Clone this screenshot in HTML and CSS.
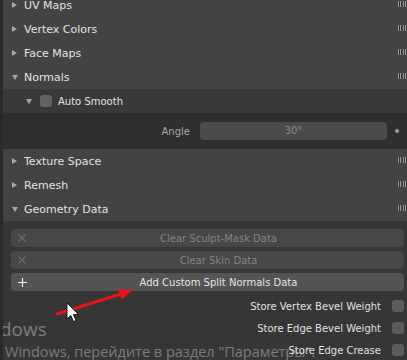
FILE: index.html
```html
<html>
  <head>
    <meta charset="utf-8" />
    <title>Properties</title>
    <link rel="stylesheet" href="styles.css">
  </head>
  <body>
    <div class="editor">
      <div class="panels">
        <div class="panel-head"><span class="tri"></span><span class="label">UV Maps</span><span class="grip"></span></div>
        <div class="panel-head"><span class="tri"></span><span class="label">Vertex Colors</span><span class="grip"></span></div>
        <div class="panel-head"><span class="tri"></span><span class="label">Face Maps</span><span class="grip"></span></div>
        <div class="panel-head"><span class="tri down"></span><span class="label">Normals</span><span class="grip"></span></div>

        <div class="sub-head">
          <span class="tri down"></span>
          <span class="check"></span>
          <span class="label">Auto Smooth</span>
        </div>
        <div class="sub-body">
          <div class="prop-row">
            <span class="prop-label">Angle</span>
            <div class="field">30°</div>
            <span class="deco"><span class="dot"></span></span>
          </div>
        </div>

        <div class="panel-head"><span class="tri"></span><span class="label">Texture Space</span><span class="grip"></span></div>
        <div class="panel-head"><span class="tri"></span><span class="label">Remesh</span><span class="grip"></span></div>
        <div class="panel-head"><span class="tri down"></span><span class="label">Geometry Data</span><span class="grip"></span></div>

        <div class="panel-body">
          <div class="button disabled">
            <span class="icon"><svg width="8" height="8" viewBox="0 0 8 8"><path d="M0.5 0.5 L7.5 7.5 M7.5 0.5 L0.5 7.5" stroke="#707070" stroke-width="1.1" /></svg></span>
            <span class="text">Clear Sculpt-Mask Data</span>
          </div>
          <div class="button disabled">
            <span class="icon"><svg width="8" height="8" viewBox="0 0 8 8"><path d="M0.5 0.5 L7.5 7.5 M7.5 0.5 L0.5 7.5" stroke="#707070" stroke-width="1.1" /></svg></span>
            <span class="text">Clear Skin Data</span>
          </div>
          <div class="button">
            <span class="icon"><svg width="9" height="9" viewBox="0 0 9 9"><path d="M4.5 0 L4.5 9 M0 4.5 L9 4.5" stroke="#f0f0f0" stroke-width="1.2" /></svg></span>
            <span class="text">Add Custom Split Normals Data</span>
          </div>

          <div class="check-row"><span>Store Vertex Bevel Weight</span><span class="check"></span></div>
          <div class="check-row"><span>Store Edge Bevel Weight</span><span class="check"></span></div>
          <div class="check-row"><span>Store Edge Crease</span><span class="check"></span></div>
        </div>
      </div>

      <div class="watermark">
        <div class="wm-title">dows</div>
        <div class="wm-text">Windows, перейдите в раздел "Параметры".</div>
      </div>

      <svg class="annot" width="407" height="360" viewBox="0 0 407 360">
        <line x1="57" y1="314" x2="121" y2="294" stroke="#e8141c" stroke-width="3" stroke-linecap="round" />
        <polygon points="133,290 121.5,299.5 118,289" fill="#e8141c" />
        <path d="M67 303 L67 319 L70.8 315.4 L73.6 321.6 L76 320.6 L73.3 314.5 L78.5 314.5 Z"
              fill="#ffffff" stroke="#000000" stroke-width="0.8" />
      </svg>
    </div>
  </body>
</html>
```

FILE: styles.css
```css
html, body {
  margin: 0;
  height: 100%;
}

body {
  background-color: #363636;
  font-family: "DejaVu Sans", Verdana, sans-serif;
  font-size: 10px;
  color: #e0e0e0;
  overflow: hidden;
}

.editor {
  position: relative;
  height: 360px;
  border-left: 3px solid #2a2a2a;
  overflow: hidden;
}

.panels {
  margin-top: -7px;
}

.panel-head {
  height: 24px;
  display: flex;
  align-items: center;
  padding-left: 9px;
  background-color: #434343;
  font-size: 11px;
  color: #e2e2e2;
}
.panel-head .label {
  flex: 1 1 0;
}

.tri {
  width: 0;
  height: 0;
  border-left: 5px solid #a6a6a6;
  border-top: 3.5px solid transparent;
  border-bottom: 3.5px solid transparent;
  margin-right: 7px;
}
.tri.down {
  border-left: 3px solid transparent;
  border-right: 3px solid transparent;
  border-top: 5px solid #a6a6a6;
  border-bottom: 0;
  margin-right: 6px;
}

.grip {
  width: 10px;
  height: 6px;
  margin-top: -2px;
  background-image: radial-gradient(circle, #c8c8c8 0.6px, transparent 0.8px);
  background-size: 2.5px 2px;
  background-color: #333333;
}

.sub-head {
  height: 24px;
  display: flex;
  align-items: center;
  padding-left: 23px;
  background-color: #393939;
}
.sub-head .tri.down {
  margin-right: 8px;
}

.check {
  width: 12px;
  height: 12px;
  border-radius: 3px;
  background-color: #626262;
}
.sub-head .check {
  margin-right: 6px;
}

.sub-body {
  background-color: #2f2f2f;
}

.prop-row {
  height: 36px;
  display: flex;
  align-items: center;
}
.prop-label {
  flex: 0 0 187px;
  text-align: right;
  color: #a8a8a8;
  margin-right: 10px;
}
.field {
  flex: 0 0 187px;
  height: 18px;
  line-height: 18px;
  border-radius: 4px;
  background-color: #4b4b4b;
  color: #8c8c8c;
  text-align: center;
}
.deco {
  flex: 0 0 20px;
  display: flex;
  justify-content: center;
}
.dot {
  width: 4px;
  height: 4px;
  border-radius: 2px;
  background-color: #9a9a9a;
}

.panel-body {
  padding: 8px 3px 0 8px;
  background-color: #363636;
  height: 200px;
}

.button {
  height: 18px;
  display: flex;
  align-items: center;
  border-radius: 4px;
  background-color: #545454;
  color: #e4e4e4;
  margin-bottom: 4px;
}
.button.disabled {
  background-color: #474747;
  color: #858585;
}
.button .icon {
  flex: 0 0 22px;
  display: flex;
  justify-content: center;
}
.button .text {
  flex: 1 1 0;
  text-align: center;
}

.check-row {
  height: 22px;
  display: flex;
  align-items: center;
  justify-content: flex-end;
  gap: 11px;
}
.panel-body .button + .check-row {
  margin-top: 1px;
}
.check-row .check {
  background-color: #5c5c5c;
}

.watermark {
  position: absolute;
  left: 0;
  top: 317px;
  font-family: "Open Sans", "Noto Sans", sans-serif;
  color: rgba(255, 255, 255, 0.36);
  pointer-events: none;
}
.wm-title {
  font-size: 19px;
  line-height: 25px;
  margin-left: -3px;
}
.wm-text {
  font-size: 14.5px;
  line-height: 20px;
  margin-left: 2px;
}

.annot {
  position: absolute;
  left: -3px;
  top: 0;
}
```
